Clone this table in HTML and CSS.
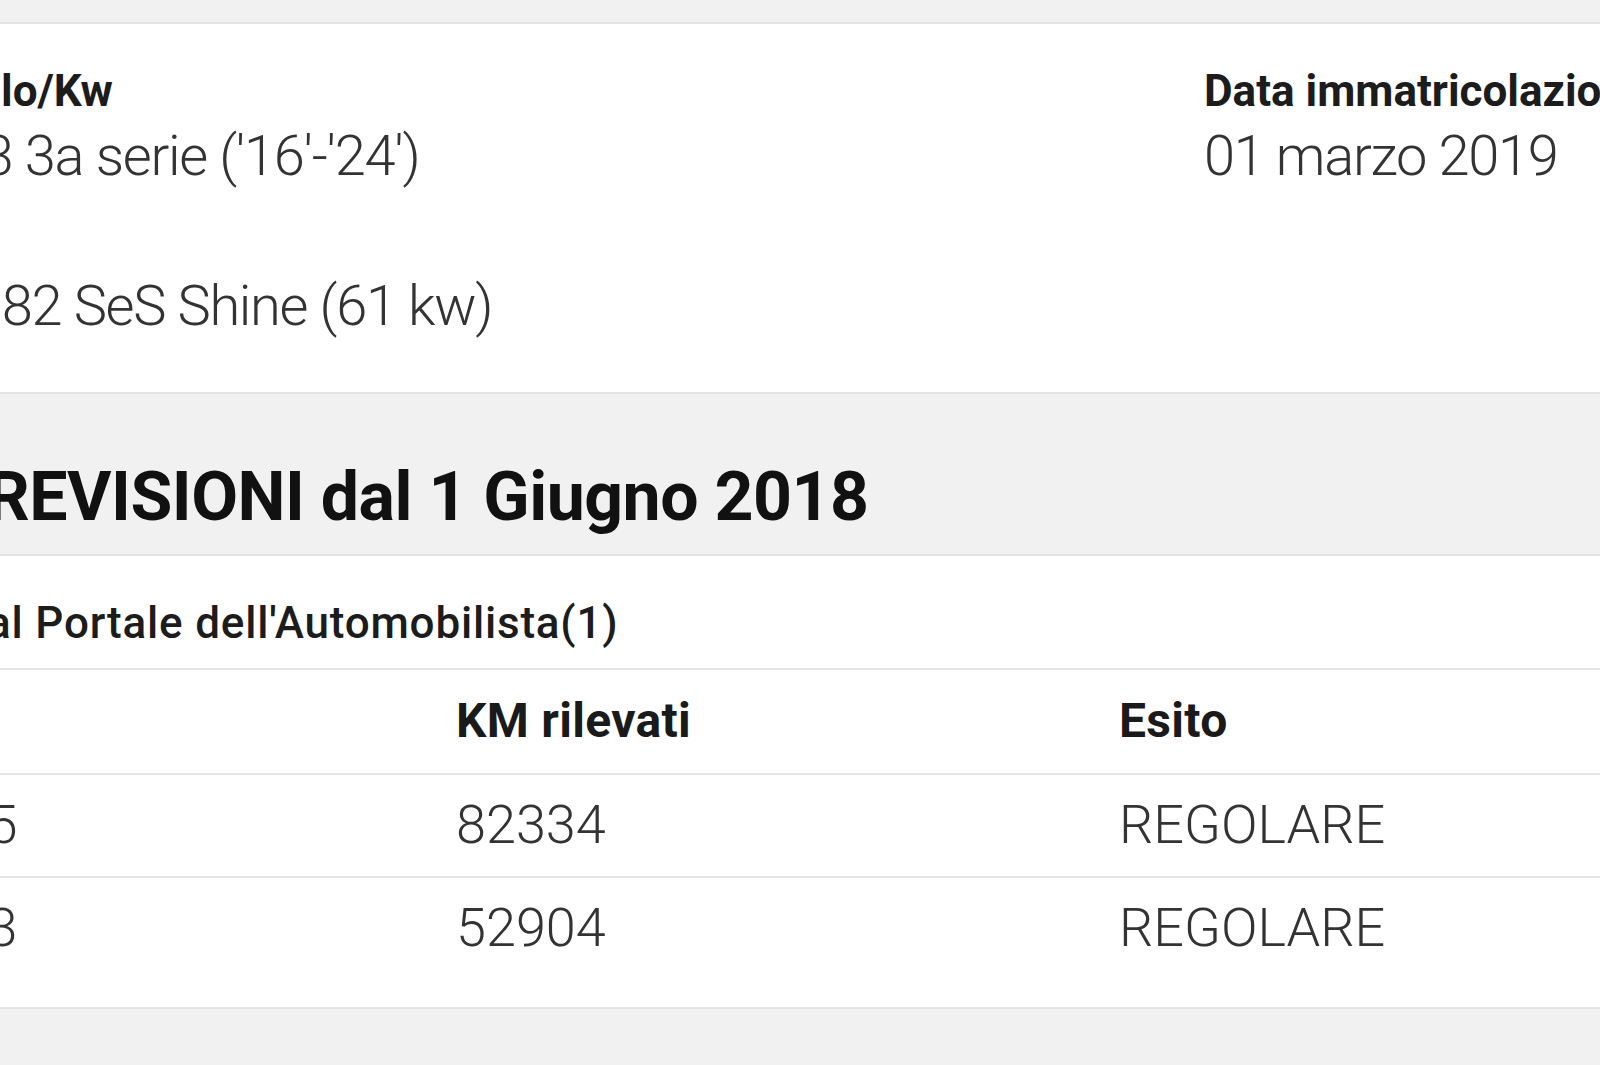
FILE: index.html
```html
<!DOCTYPE html>
<html lang="it">
<head>
<meta charset="utf-8">
<title>Dettaglio veicolo</title>
<link rel="stylesheet" href="styles.css">
</head>
<body>
<div class="page">
  <section class="card info">
    <div class="info-grid">
      <div class="field">
        <div class="label">Auto/Modello/Kw</div>
        <div class="value">Citroen C3 3a serie ('16'-'24')<br><br>PureTech 82 SeS Shine (61 kw)</div>
      </div>
      <div class="field">
        <div class="label">Data immatricolazione</div>
        <div class="value">01 marzo 2019</div>
      </div>
    </div>
  </section>

  <div class="section-head">
    <h2 class="section-title">Elenco REVISIONI dal 1 Giugno 2018</h2>
  </div>

  <section class="card revisions">
    <div class="subtitle">Dati tratti dal Portale dell'Automobilista(1)</div>
    <table class="rev-table">
      <colgroup>
        <col class="c-date">
        <col class="c-km">
        <col class="c-esito">
      </colgroup>
      <thead>
        <tr><th>Data</th><th>KM rilevati</th><th>Esito</th></tr>
      </thead>
      <tbody>
        <tr><td>12/03/2025</td><td>82334</td><td>REGOLARE</td></tr>
        <tr><td>08/03/2023</td><td>52904</td><td>REGOLARE</td></tr>
      </tbody>
    </table>
  </section>
</div>
</body>
</html>
```

FILE: styles.css
```css
html, body {
  margin: 0;
  padding: 0;
  overflow: hidden;
  background: #f1f1f1;
}

body {
  font-family: Roboto, "Liberation Sans", Arial, sans-serif;
  color: #333;
}

.page {
  margin-left: -232px;
  width: 2800px;
  padding-top: 22px;
}

.card {
  background: #ffffff;
  border-top: 2px solid #e3e3e3;
  border-bottom: 2px solid #e3e3e3;
}

.info {
  padding: 39px 0 48px;
}

.info-grid {
  display: grid;
  grid-template-columns: 1436px 1fr;
}

.label {
  font-size: 44px;
  line-height: 56px;
  font-weight: 700;
  color: #1c1c1c;
  white-space: nowrap;
}

.value {
  font-size: 56px;
  line-height: 75px;
  font-weight: 300;
  letter-spacing: -1.3px;
  color: #333;
  white-space: nowrap;
}

.section-head {
  padding: 63px 0 17px;
}

.section-title {
  margin: 0;
  font-size: 68px;
  line-height: 80px;
  font-weight: 700;
  letter-spacing: -0.5px;
  color: #111;
  white-space: nowrap;
}

.revisions {
  padding: 0 0 28px;
}

.subtitle {
  padding: 39px 0 17px;
  font-size: 44px;
  line-height: 56px;
  font-weight: 500;
  letter-spacing: 0.8px;
  color: #1c1c1c;
  white-space: nowrap;
  margin-left: -10px;
}

.rev-table {
  border-collapse: collapse;
  table-layout: fixed;
  width: 2800px;
  margin-left: -33px;
  border-top: 2px solid #e3e5ea;
}

.c-date { width: 721px; }
.c-km { width: 663px; }

.rev-table th,
.rev-table td {
  text-align: left;
  padding: 0;
  white-space: nowrap;
}

.rev-table th {
  font-size: 48px;
  line-height: 60px;
  font-weight: 700;
  letter-spacing: 0.3px;
  color: #1a1a1a;
  padding: 21px 0 22px;
  border-bottom: 2px solid #e3e5ea;
}

.rev-table td {
  font-size: 54px;
  line-height: 60px;
  font-weight: 300;
  color: #333;
  padding: 20px 0 21px;
}

.rev-table tbody tr + tr td {
  border-top: 2px solid #e3e5ea;
}
```
